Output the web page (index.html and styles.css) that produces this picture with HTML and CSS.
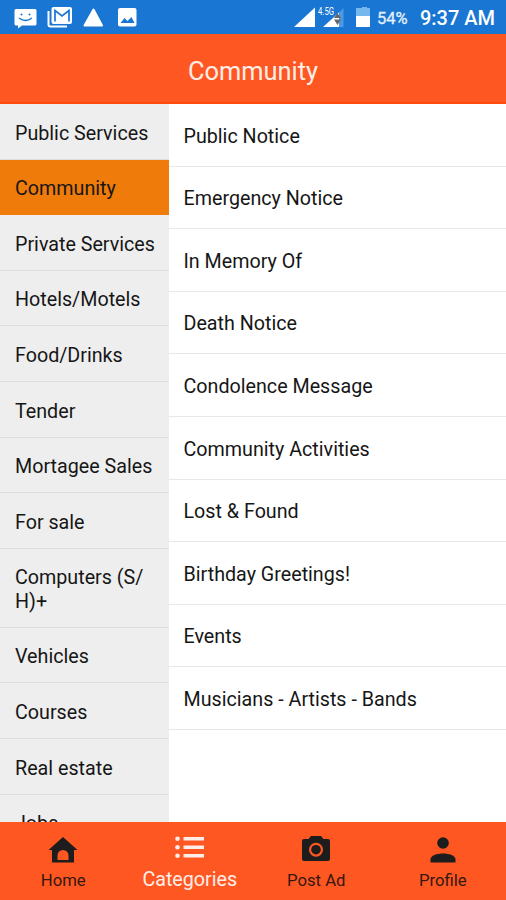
FILE: index.html
```
<!DOCTYPE html>
<html lang="en">
<head>
    <meta charset="UTF-8">
    <meta name="viewport" content="width=device-width, initial-scale=1.0">
    <title>Community</title>
    <link rel="stylesheet" href="styles.css">
</head>
<body>
    <div class="statusbar">
        <svg class="status-icons" width="140" height="34" viewBox="0 0 140 34">
            <path fill="#fff" d="M16 9h19q1.500 0 1.500 1.500v13.500q0 1.500-1.500 1.500H22l-4 3v-3h-2q-1.500 0-1.500-1.500V10.500Q14.500 9 16 9z"/>
            <path fill="none" stroke="#1976d2" stroke-width="1.300" d="M19 18q6.500 5 13 0"/>
            <circle cx="21.500" cy="14.500" r="1" fill="#1976d2"/>
            <circle cx="29.500" cy="14.500" r="1" fill="#1976d2"/>
            <path fill="none" stroke="#fff" stroke-width="2" d="M48.500 11v13.500q0 2 2 2H67"/>
            <rect x="51.500" y="7" width="20.500" height="17" rx="2" fill="#fff"/>
            <path fill="none" stroke="#1976d2" stroke-width="1.700" d="M55 21.500V10.500l7 5.500 7-5.500v11"/>
            <path fill="#fff" stroke="#fff" stroke-width="2" stroke-linejoin="round" d="M93.500 9.500l8.500 16H84.500z"/>
            <rect x="118" y="8" width="18.500" height="18.500" rx="2" fill="#fff"/>
            <path fill="#1976d2" d="M120.500 23l4-5 3 3 4-4 3 6z"/>
        </svg>
        <svg class="signal" width="84" height="34" viewBox="0 0 84 34">
            <path fill="#fff" d="M25 7.500v19.500H4z"/>
            <path fill="#4c9ae6" d="M53.500 8v19H35z"/>
            <path fill="#fff" d="M49 12.500V27H33z"/>
            <path fill="#666" d="M44 18l3.500-5 3.500 5zM44 19.500h7L47.500 25z"/>
            <text class="network" x="28" y="15" textLength="16" lengthAdjust="spacingAndGlyphs">4.5G</text>
            <path fill="#75b8ee" d="M69 8h3V7h5v1h3v8H66V8z"/>
            <path fill="#fff" d="M66 16h14v11H66z"/>
        </svg>
        <span class="battery">54%</span>
        <span class="clock">9:37 AM</span>
    </div>

    <div class="header">Community</div>

    <div class="content">
        <ul class="sidebar">
            <li>Public Services</li>
            <li class="active">Community</li>
            <li>Private Services</li>
            <li>Hotels/Motels</li>
            <li>Food/Drinks</li>
            <li>Tender</li>
            <li>Mortagee Sales</li>
            <li>For sale</li>
            <li>Computers (S/<br>H)+</li>
            <li>Vehicles</li>
            <li>Courses</li>
            <li>Real estate</li>
            <li>Jobs</li>
        </ul>
        <ul class="list">
            <li>Public Notice</li>
            <li>Emergency Notice</li>
            <li>In Memory Of</li>
            <li>Death Notice</li>
            <li>Condolence Message</li>
            <li>Community Activities</li>
            <li>Lost &amp; Found</li>
            <li>Birthday Greetings!</li>
            <li>Events</li>
            <li>Musicians - Artists - Bands</li>
        </ul>
    </div>

    <div class="tabs">
        <div class="tab">
            <svg width="30" height="28" viewBox="0 0 30 28">
                <path d="M15 1L29.500 14H26v12.500H4V14H.5zM9.500 24h11v-4.500a5.500 5.500 0 0 0-11 0z" fill-rule="evenodd"/>
            </svg>
            <span>Home</span>
        </div>
        <div class="tab selected">
            <svg width="30" height="28" viewBox="0 0 30 28">
                <circle cx="2.500" cy="2.800" r="2.300"/>
                <circle cx="2.500" cy="11.300" r="2.300"/>
                <circle cx="2.500" cy="19.800" r="2.300"/>
                <path d="M8.500 1H29v3.600H8.500zM8.500 9.500H29v3.600H8.500zM8.500 18H29v3.600H8.500z"/>
            </svg>
            <span>Categories</span>
        </div>
        <div class="tab">
            <svg width="30" height="28" viewBox="0 0 30 28">
                <path fill-rule="evenodd" d="M10 0h10l2.500 3H27q2 0 2 2v18q0 2-2 2H3q-2 0-2-2V5q0-2 2-2h4.500zM15 6.700a7 7 0 1 0 0 14 7 7 0 0 0 0-14z"/>
                <circle cx="15" cy="13.700" r="4.800"/>
            </svg>
            <span>Post Ad</span>
        </div>
        <div class="tab">
            <svg width="30" height="28" viewBox="0 0 30 28">
                <circle cx="15" cy="7" r="5.800"/>
                <path d="M2.500 26.500v-3c0-8 25-8 25 0v3z"/>
            </svg>
            <span>Profile</span>
        </div>
    </div>
</body>
</html>
```
FILE: styles.css
```
* {
    box-sizing: border-box;
}

body {
    font-family: Roboto, sans-serif;
    background-color: #fff;
    color: #161616;
    margin: 0;
    height: 900px;
    display: flex;
    flex-direction: column;
    overflow: hidden;
}

ul {
    list-style: none;
    margin: 0;
    padding: 0;
}

.statusbar {
    height: 34px;
    background-color: #1976d2;
    color: #fff;
    display: flex;
    align-items: center;
    flex-shrink: 0;
    padding-right: 11px;
}

.signal {
    margin-left: auto;
}

.network {
    font-size: 11px;
    fill: #fff;
}

.battery {
    font-size: 16.5px;
    width: 31px;
    margin: 2px 12px 0 3px;
    color: #e3effa;
    -webkit-text-stroke: 0.3px #e3effa;
}

.clock {
    font-size: 20px;
    font-weight: 500;
    margin-top: 2px;
}

.header {
    height: 70px;
    flex-shrink: 0;
    background-color: #ff5722;
    border-bottom: 2px solid #ff4a0c;
    color: #ffeee8;
    font-size: 25.4px;
    line-height: 74px;
    text-align: center;
}

.content {
    flex: 1;
    min-height: 0;
    display: flex;
    overflow: hidden;
    font-size: 19.7px;
    line-height: 23.4px;
}

.sidebar {
    width: 169px;
    background-color: #eee;
}

.sidebar li {
    padding: 17.6px 0 13.6px 15px;
    border-bottom: 1px solid #dedede;
    white-space: nowrap;
}

.sidebar .active {
    background-color: #ef7b0a;
    border-color: #ef7b0a;
}

.list {
    flex: 1;
}

.list li {
    height: 62.6px;
    padding: 20.7px 0 0 14.5px;
    border-bottom: 1px solid #e8e8e8;
}

.tabs {
    height: 78px;
    flex-shrink: 0;
    background-color: #ff5722;
    display: flex;
}

.tab {
    flex: 1;
    display: flex;
    flex-direction: column;
    align-items: center;
    padding-top: 14px;
    font-size: 16.7px;
    line-height: 20px;
    color: #33180f;
}

.tab svg {
    fill: #1d1d1d;
}

.tab span {
    margin-top: 7px;
}

.selected {
    font-size: 19.7px;
    color: #ffeee8;
}

.selected svg {
    fill: #ffeee8;
}

.selected span {
    margin-top: 6px;
}
```
